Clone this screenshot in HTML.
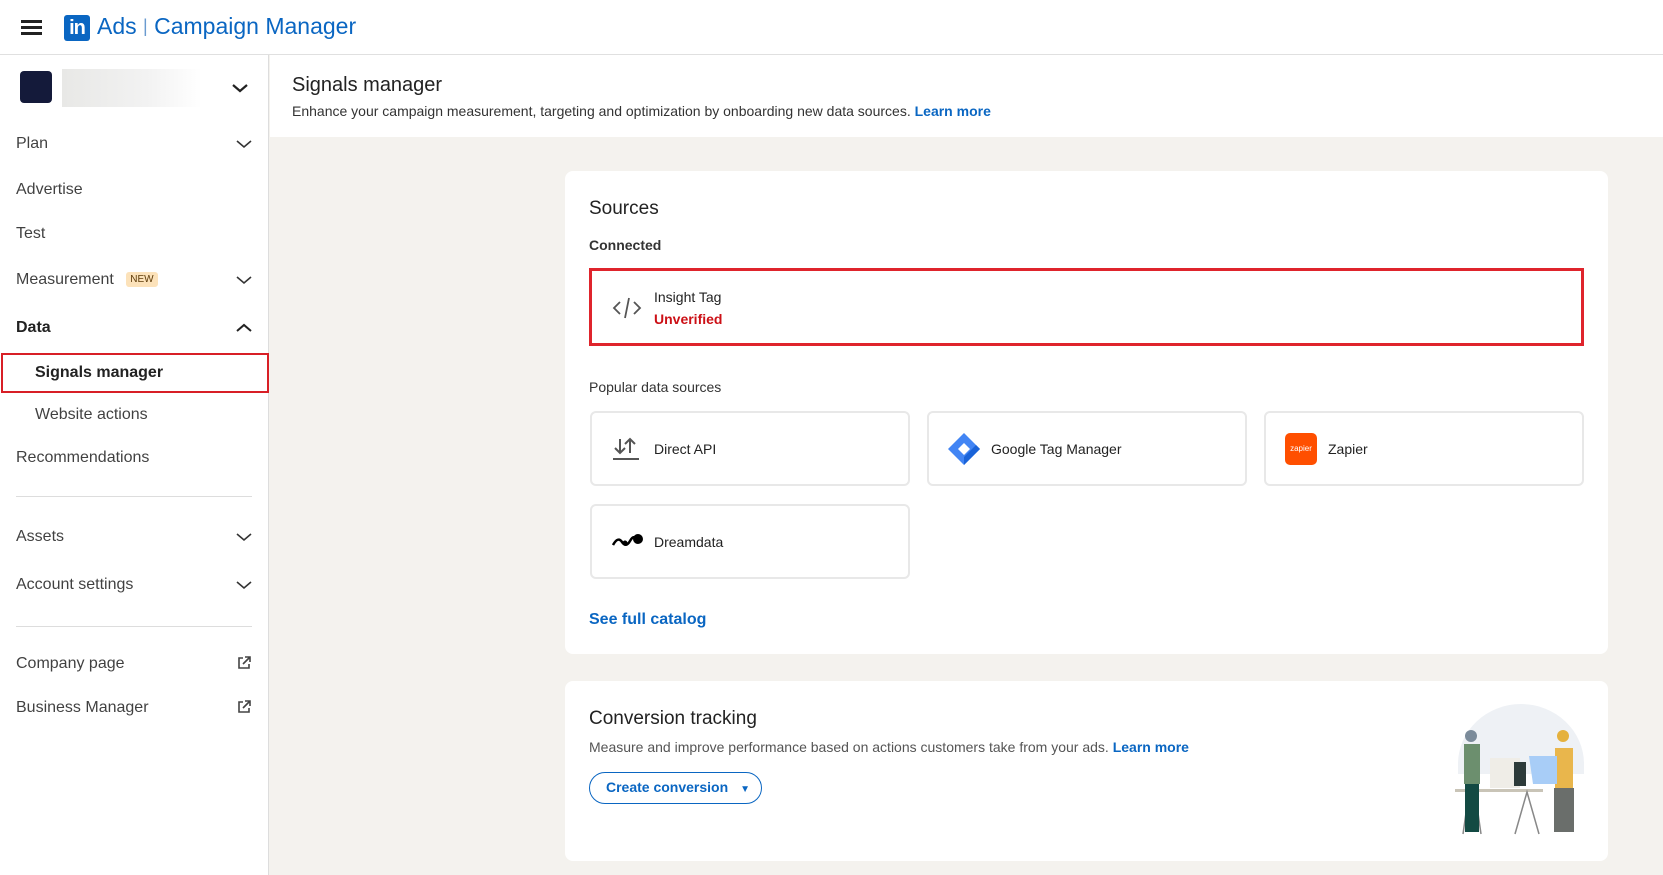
<!DOCTYPE html>
<html><head><meta charset="utf-8"><style>
*{box-sizing:border-box;margin:0;padding:0}
body{width:1663px;height:875px;overflow:hidden;font-family:"Liberation Sans",sans-serif;background:#f4f2ee;color:#000;position:relative}
.abs{position:absolute}
.hdr{left:0;top:0;width:1663px;height:55px;background:#fff;border-bottom:1px solid #e0e0e0}
.side{left:0;top:55px;width:269px;height:820px;background:#fff;border-right:1px solid #ddd}
.nav{position:absolute;left:16px;font-size:16px;color:rgba(0,0,0,.75);transform:translateY(-50%)}
.chev{position:absolute;left:236px}
.card{background:#fff;border-radius:8px;position:absolute}
.tile{position:absolute;border:2px solid #e8e8e8;border-radius:6px;background:#fff;width:320px;height:75px}
.tile span{position:absolute;left:62px;top:50%;transform:translateY(-50%);font-size:14px;color:#222}
.ext{position:absolute;left:237px}
</style></head><body>
<div class="abs hdr">
  <div class="abs" style="left:21px;top:20px;width:21px;height:2.5px;background:#222;box-shadow:0 6px 0 #222,0 12px 0 #222"></div>
  <div class="abs" style="left:64px;top:15px;width:26px;height:26px;background:#0a66c2;border-radius:3px;color:#fff;font-weight:bold;font-size:20px;line-height:27px;text-align:center;letter-spacing:-1px">in</div>
  <div class="abs" style="left:97px;top:13px;font-size:23px;color:#0a66c2">Ads <span style="font-size:18px;position:relative;top:-2px;color:#6a9bd0">|</span> Campaign Manager</div>
</div>
<div class="abs side">
  <div class="abs" style="left:20px;top:16px;width:32px;height:32px;background:#141a3a;border-radius:4px"></div>
  <div class="abs" style="left:62px;top:14px;width:140px;height:38px;background:linear-gradient(90deg,#e8e8e6,#f2f2f2 60%,#fff)"></div>
  <svg class="abs" style="left:232px;top:28px" width="16" height="10" viewBox="0 0 16 10"><path d="M1 2l7 6 7-6" stroke="#222" stroke-width="2.2" fill="none"/></svg>
</div>
<svg class="chev" style="top:140px" width="16" height="9" viewBox="0 0 16 9"><path d="M1 1l7 6 7-6" stroke="#333" stroke-width="1.6" fill="none"/></svg>
<div class="nav" style="top:144px">Plan</div>
<div class="nav" style="top:190px">Advertise</div>
<div class="nav" style="top:234px">Test</div>
<div class="nav" style="top:280px">Measurement <span style="font-size:10px;background:#fce2ba;color:#5d3b09;padding:2px 4px;border-radius:3px;margin-left:8px;vertical-align:middle">NEW</span></div>
<svg class="chev" style="top:276px" width="16" height="9" viewBox="0 0 16 9"><path d="M1 1l7 6 7-6" stroke="#333" stroke-width="1.6" fill="none"/></svg>
<div class="nav" style="top:328px;font-weight:bold;color:#222">Data</div>
<svg class="chev" style="top:323px" width="16" height="9" viewBox="0 0 16 9"><path d="M1 8l7-6 7 6" stroke="#222" stroke-width="2" fill="none"/></svg>
<div class="abs" style="left:1px;top:353px;width:268px;height:40px;border:2.5px solid #d81f26"></div>
<div class="nav" style="top:373px;left:35px;font-weight:bold;color:#222">Signals manager</div>
<div class="nav" style="top:415px;left:35px">Website actions</div>
<div class="nav" style="top:458px">Recommendations</div>
<div class="abs" style="left:16px;top:496px;width:236px;height:1px;background:#ddd"></div>
<div class="nav" style="top:537px">Assets</div>
<svg class="chev" style="top:533px" width="16" height="9" viewBox="0 0 16 9"><path d="M1 1l7 6 7-6" stroke="#333" stroke-width="1.6" fill="none"/></svg>
<div class="nav" style="top:585px">Account settings</div>
<svg class="chev" style="top:581px" width="16" height="9" viewBox="0 0 16 9"><path d="M1 1l7 6 7-6" stroke="#333" stroke-width="1.6" fill="none"/></svg>
<div class="abs" style="left:16px;top:626px;width:236px;height:1px;background:#ddd"></div>
<div class="nav" style="top:664px">Company page</div>
<svg class="ext" style="top:656px" width="14" height="14" viewBox="0 0 14 14" fill="none" stroke="#444" stroke-width="1.6"><path d="M6 2H2v10h10V8M8 1h5v5M13 1L6 8"/></svg>
<div class="nav" style="top:708px">Business Manager</div>
<svg class="ext" style="top:700px" width="14" height="14" viewBox="0 0 14 14" fill="none" stroke="#444" stroke-width="1.6"><path d="M6 2H2v10h10V8M8 1h5v5M13 1L6 8"/></svg>
<div class="abs" style="left:270px;top:55px;width:1393px;height:82px;background:#fff"></div>
<div class="abs" style="left:292px;top:74px;font-size:20px;color:#222">Signals manager</div>
<div class="abs" style="left:292px;top:103px;font-size:14px;color:#333">Enhance your campaign measurement, targeting and optimization by onboarding new data sources. <b style="color:#0a66c2">Learn more</b></div>
<div class="card" style="left:565px;top:171px;width:1043px;height:483px"></div>
<div class="abs" style="left:589px;top:198px;font-size:19px;color:#222">Sources</div>
<div class="abs" style="left:589px;top:237px;font-size:14px;font-weight:bold;color:#333">Connected</div>
<div class="abs" style="left:589px;top:268px;width:995px;height:78px;border:3px solid #df242c"></div>
<svg class="abs" style="left:612px;top:296px" width="30" height="24" viewBox="0 0 30 24" fill="none" stroke="#555" stroke-width="1.8"><path d="M8 6L2 12l6 6M22 6l6 6-6 6M17 2l-4 20"/></svg>
<div class="abs" style="left:654px;top:289px;font-size:14px;color:#222">Insight Tag</div>
<div class="abs" style="left:654px;top:311px;font-size:14px;font-weight:bold;color:#cc1016">Unverified</div>
<div class="abs" style="left:589px;top:379px;font-size:14px;color:#333">Popular data sources</div>
<div class="tile" style="left:590px;top:411px"><svg class="abs" style="left:20px;top:24px" width="28" height="24" viewBox="0 0 28 24" fill="none" stroke="#555" stroke-width="2"><path d="M8 2v14M3 11l5 5 5-5M18 16V2M13 7l5-5 5 5M1 22h26"/></svg><span>Direct API</span></div>
<div class="tile" style="left:927px;top:411px"><svg class="abs" style="left:18px;top:19px" width="34" height="34" viewBox="0 0 34 34"><path d="M17 1L33 17 17 33 1 17Z" fill="#4285f4"/><path d="M17 11l6 6-6 6-6-6z" fill="#fff"/><path d="M17 33L33 17 29 13 17 25" fill="#1a63d8"/></svg><span>Google Tag Manager</span></div>
<div class="tile" style="left:1264px;top:411px"><div class="abs" style="left:19px;top:20px;width:32px;height:32px;background:#ff4f00;border-radius:5px;color:#fff;font-size:8px;line-height:32px;text-align:center">zapier</div><span>Zapier</span></div>
<div class="tile" style="left:590px;top:504px"><svg class="abs" style="left:20px;top:26px" width="32" height="16" viewBox="0 0 32 16"><path d="M1 13Q6 4 10 10T18 9T24 8" stroke="#000" stroke-width="2.5" fill="none"/><circle cx="26" cy="7" r="5" fill="#000"/><circle cx="13" cy="11" r="2.5"/></svg><span>Dreamdata</span></div>
<div class="abs" style="left:589px;top:611px;font-size:16px;font-weight:bold;color:#0a66c2">See full catalog</div>
<div class="card" style="left:565px;top:681px;width:1043px;height:180px"></div>
<div class="abs" style="left:589px;top:708px;font-size:19px;color:#222">Conversion tracking</div>
<div class="abs" style="left:589px;top:739px;font-size:14px;color:#555">Measure and improve performance based on actions customers take from your ads. <b style="color:#0a66c2">Learn more</b></div>
<div class="abs" style="left:589px;top:772px;width:173px;height:32px;border:1.5px solid #0a66c2;border-radius:16px;color:#0a66c2;font-size:14px;font-weight:bold;line-height:29px;padding-left:16px">Create conversion <span style="font-size:10px;margin-left:8px">▼</span></div>
<svg class="abs" style="left:1455px;top:704px" width="132" height="132" viewBox="0 0 132 132">
<path d="M3 60A63 60 0 0 1 129 60V70H3Z" fill="#eef1f5"/>
<rect x="0" y="85" width="88" height="3" fill="#c9c4b7"/>
<path d="M8 130L14 88M26 130L20 88M60 130L72 88 84 130" stroke="#888" stroke-width="1.5" fill="none"/>
<rect x="35" y="54" width="30" height="30" fill="#efede7"/><rect x="59" y="58" width="12" height="24" fill="#2d3b3a"/>
<circle cx="16" cy="32" r="6" fill="#7b8b9a"/><path d="M9 40h16v40H9Z" fill="#6c8f6e"/><path d="M10 80h14v48H10Z" fill="#134a43"/>
<circle cx="108" cy="32" r="6" fill="#e5b13d"/><path d="M100 44h18v40h-18Z" fill="#e9b64c"/><path d="M99 84h20v44H99Z" fill="#6a6e6b"/>
<path d="M74 52h28v28H78Z" fill="#a8cdf7"/>
</svg>
</body></html>
